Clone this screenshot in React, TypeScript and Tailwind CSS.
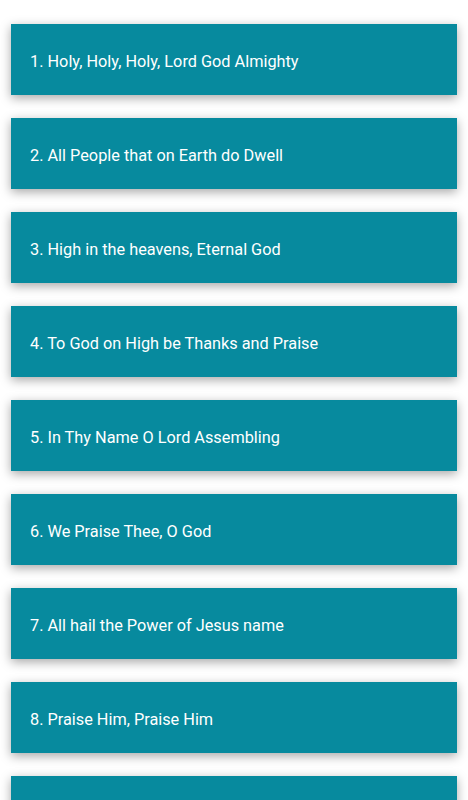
import React from "react";

const hymns = [
  "1. Holy, Holy, Holy, Lord God Almighty",
  "2. All People that on Earth do Dwell",
  "3. High in the heavens, Eternal God",
  "4. To God on High be Thanks and Praise",
  "5. In Thy Name O Lord Assembling",
  "6. We Praise Thee, O God",
  "7. All hail the Power of Jesus name",
  "8. Praise Him, Praise Him",
  "",
];

export default function App() {
  return (
    <div className="w-[468px] h-[800px] overflow-hidden bg-white" style={{ fontFamily: "Roboto, 'Noto Sans', sans-serif" }}>
      <div className="flex flex-col gap-[23px] pt-[24px] pl-[11px] pr-[11px]">
        {hymns.map((h, i) => (
          <div
            key={i}
            className="h-[71px] shrink-0 bg-[#078a9e] flex items-center pl-[19px] pt-[5px] text-white text-[16.3px] shadow-[0_3px_10px_rgba(0,0,0,0.35)]"
          >
            {h}
          </div>
        ))}
      </div>
    </div>
  );
}
